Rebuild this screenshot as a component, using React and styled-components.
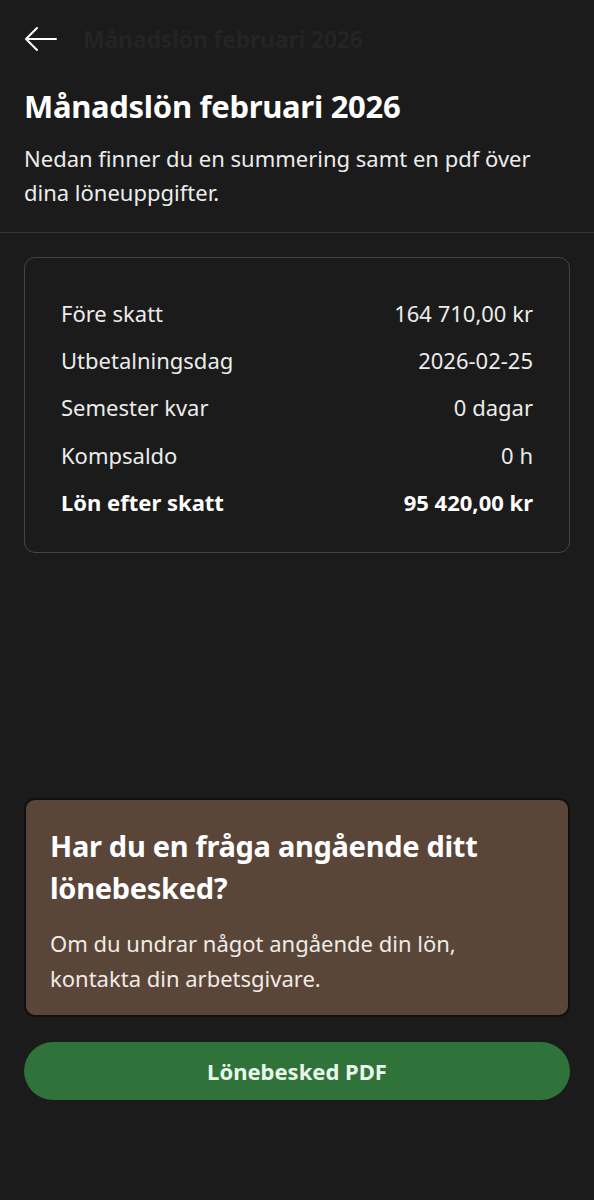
import React from "react";
import styled, { createGlobalStyle } from "styled-components";

const Global = createGlobalStyle`
  html, body { margin: 0; padding: 0; background: #1b1b1b; }
  body { font-family: "Noto Sans", "Open Sans", sans-serif; color: #f2f2f2; }
  * { box-sizing: border-box; }
`;

const Screen = styled.div`
  width: 594px;
  min-height: 1200px;
  background: #1b1b1b;
  display: flex;
  flex-direction: column;
`;

const TopBar = styled.header`
  height: 80px;
  display: flex;
  align-items: flex-start;
  gap: 25px;
  padding: 25px 24px 0;
`;

const BackButton = styled.button`
  width: 34px;
  height: 28px;
  padding: 0;
  border: 0;
  background: transparent;
  color: #ffffff;
  display: flex;
  align-items: center;
  justify-content: center;
`;

const FadedTitle = styled.span`
  font-size: 23px;
  font-weight: 700;
  color: #242424;
  line-height: 28px;
  letter-spacing: -0.2px;
`;

const Intro = styled.section`
  padding: 8px 24px 23px;
  border-bottom: 1px solid #383838;
`;

const Title = styled.h1`
  margin: 0 0 17px;
  font-size: 31px;
  font-weight: 700;
  line-height: 36px;
  color: #ffffff;
  letter-spacing: -0.3px;
`;

const Lead = styled.p`
  margin: 0;
  font-size: 22px;
  line-height: 34px;
  color: #ececec;
  font-weight: 400;
`;

const Content = styled.main`
  flex: 1;
  display: flex;
  flex-direction: column;
  padding: 24px 24px 100px;
`;

const SummaryCard = styled.section`
  border: 1px solid #454545;
  border-radius: 11px;
  padding: 31px 36px 27px 36px;
  display: flex;
  flex-direction: column;
`;

const Row = styled.div`
  display: flex;
  justify-content: space-between;
  align-items: center;
  height: 47.3px;
  font-size: 22px;
  font-weight: ${(p) => (p.$strong ? 700 : 400)};
  color: ${(p) => (p.$strong ? "#ffffff" : "#ececec")};
`;

const Spacer = styled.div`
  flex: 1;
`;

const InfoCard = styled.section`
  background: #5a4639;
  border: 2px solid #101010;
  border-radius: 11px;
  padding: 25px 24px 19px;
`;

const InfoTitle = styled.h2`
  margin: 0 0 17px;
  font-size: 29px;
  line-height: 42px;
  font-weight: 700;
  color: #ffffff;
  letter-spacing: -0.3px;
`;

const InfoText = styled.p`
  margin: 0;
  font-size: 22px;
  line-height: 35px;
  color: #f0ebe6;
`;

const PdfButton = styled.button`
  margin-top: 25px;
  height: 58px;
  border: 0;
  border-radius: 30px;
  background: #2f723a;
  color: #e9f7ea;
  font-family: inherit;
  font-size: 22px;
  font-weight: 700;
  display: flex;
  align-items: center;
  justify-content: center;
`;

const rows = [
  ["Före skatt", "164 710,00 kr"],
  ["Utbetalningsdag", "2026-02-25"],
  ["Semester kvar", "0 dagar"],
  ["Kompsaldo", "0 h"],
  ["Lön efter skatt", "95 420,00 kr", true],
];

export default function App() {
  return (
    <Screen>
      <Global />
      <TopBar>
        <BackButton aria-label="Tillbaka">
          <svg width="34" height="26" viewBox="0 0 34 26" fill="none" stroke="#fff" strokeWidth="2" strokeLinecap="round" strokeLinejoin="round">
            <path d="M32 13H3" />
            <path d="M13 2L2 13l11 11" />
          </svg>
        </BackButton>
        <FadedTitle>Månadslön februari 2026</FadedTitle>
      </TopBar>
      <Intro>
        <Title>Månadslön februari 2026</Title>
        <Lead>Nedan finner du en summering samt en pdf över dina löneuppgifter.</Lead>
      </Intro>
      <Content>
        <SummaryCard>
          {rows.map(([label, value, strong]) => (
            <Row key={label} $strong={strong}>
              <span>{label}</span>
              <span>{value}</span>
            </Row>
          ))}
        </SummaryCard>
        <Spacer />
        <InfoCard>
          <InfoTitle>Har du en fråga angående ditt lönebesked?</InfoTitle>
          <InfoText>Om du undrar något angående din lön, kontakta din arbetsgivare.</InfoText>
        </InfoCard>
        <PdfButton>Lönebesked PDF</PdfButton>
      </Content>
    </Screen>
  );
}
